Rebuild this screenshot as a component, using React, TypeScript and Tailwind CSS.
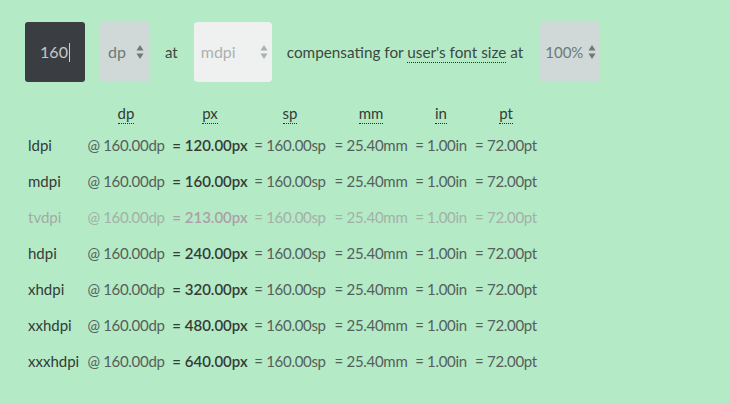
import React from "react";

const rows = [
  { name: "ldpi", px: "120.00", dim: false },
  { name: "mdpi", px: "160.00", dim: false },
  { name: "tvdpi", px: "213.00", dim: true },
  { name: "hdpi", px: "240.00", dim: false },
  { name: "xhdpi", px: "320.00", dim: false },
  { name: "xxhdpi", px: "480.00", dim: false },
  { name: "xxxhdpi", px: "640.00", dim: false },
];

function Arrows({ color }: { color: string }) {
  return (
    <svg width="8" height="16" viewBox="0 0 8 16" className="shrink-0">
      <path d="M4 1 L7.5 6.5 L0.5 6.5 Z" fill={color} />
      <path d="M4 15 L7.5 9.5 L0.5 9.5 Z" fill={color} />
    </svg>
  );
}

const headers = ["dp", "px", "sp", "mm", "in", "pt"];
const cols = "grid grid-cols-[56px_84px_84px_76px_86px_54px_76px]";

export default function App() {
  return (
    <div
      className="w-[729px] h-[404px] bg-[#b4eac5] text-[#333b37] overflow-hidden"
      style={{ fontFamily: "Lato, 'Noto Sans', sans-serif" }}
    >
      <div className="flex items-center pt-[22px] pl-[25px]">
        <div className="w-[60px] h-[60px] rounded-[3px] bg-[#3a3e43] flex items-center justify-center text-[16px] text-[#c3c9c8]">
          <span>160</span>
          <span className="inline-block w-px h-[19px] bg-[#c9cfcd] ml-[1px]" />
        </div>
        <div className="ml-[15px] w-[50px] h-[60px] rounded-[4px] bg-[#d0d9d8] flex items-center justify-between pl-[8px] pr-[6px] text-[16px] text-[#6b7a77]">
          <span>dp</span>
          <Arrows color="#6b7a77" />
        </div>
        <span className="ml-[15px] text-[15px] text-[#3d4843]">at</span>
        <div className="ml-[16px] w-[78px] h-[60px] rounded-[4px] bg-[#eff1f1] flex items-center justify-between pl-[7px] pr-[4px] text-[16px] text-[#a9b1b0]">
          <span>mdpi</span>
          <Arrows color="#a9b1b0" />
        </div>
        <span className="ml-[15px] text-[15.3px] text-[#3d4843] whitespace-nowrap">
          compensating for{" "}
          <span className="border-b border-dotted border-[#2d332f] pb-[1px]">user's font size</span> at
        </span>
        <div className="ml-[17px] w-[60px] h-[60px] rounded-[4px] bg-[#d0d9d8] flex items-center justify-between pl-[5px] pr-[4px] text-[15px] text-[#6b7a77]">
          <span>100%</span>
          <Arrows color="#6b7a77" />
        </div>
      </div>

      <div className="pl-[28px] mt-[20px]">
        <div className={cols + " h-[22px] items-center text-[15px] text-[#333b37]"}>
          <div />
          {headers.map((h) => (
            <div key={h} className="text-center">
              <span className="border-b border-dotted border-[#2d332f] pb-[1px] leading-none">{h}</span>
            </div>
          ))}
        </div>
        <div className="mt-[3px] flex flex-col">
          {rows.map((r) => (
            <div
              key={r.name}
              className={
                cols +
                " h-[36px] items-center text-[15px] whitespace-nowrap " +
                (r.dim ? "text-[#a3b1a8]" : "text-[#56605b]")
              }
            >
              <div className={r.dim ? "text-[#a0aca5]" : "text-[#333b37]"}>{r.name}</div>
              <div className="text-center tracking-[-0.3px]">@ 160.00dp</div>
              <div className={"text-center font-semibold " + (r.dim ? "text-[#ac9fa8]" : "text-[#353b38]")}>= {r.px}px</div>
              <div className="text-center tracking-[-0.3px]">= 160.00sp</div>
              <div className="text-center tracking-[-0.3px]">= 25.40mm</div>
              <div className="text-center tracking-[-0.3px]">= 1.00in</div>
              <div className="text-center tracking-[-0.3px]">= 72.00pt</div>
            </div>
          ))}
        </div>
      </div>
    </div>
  );
}
